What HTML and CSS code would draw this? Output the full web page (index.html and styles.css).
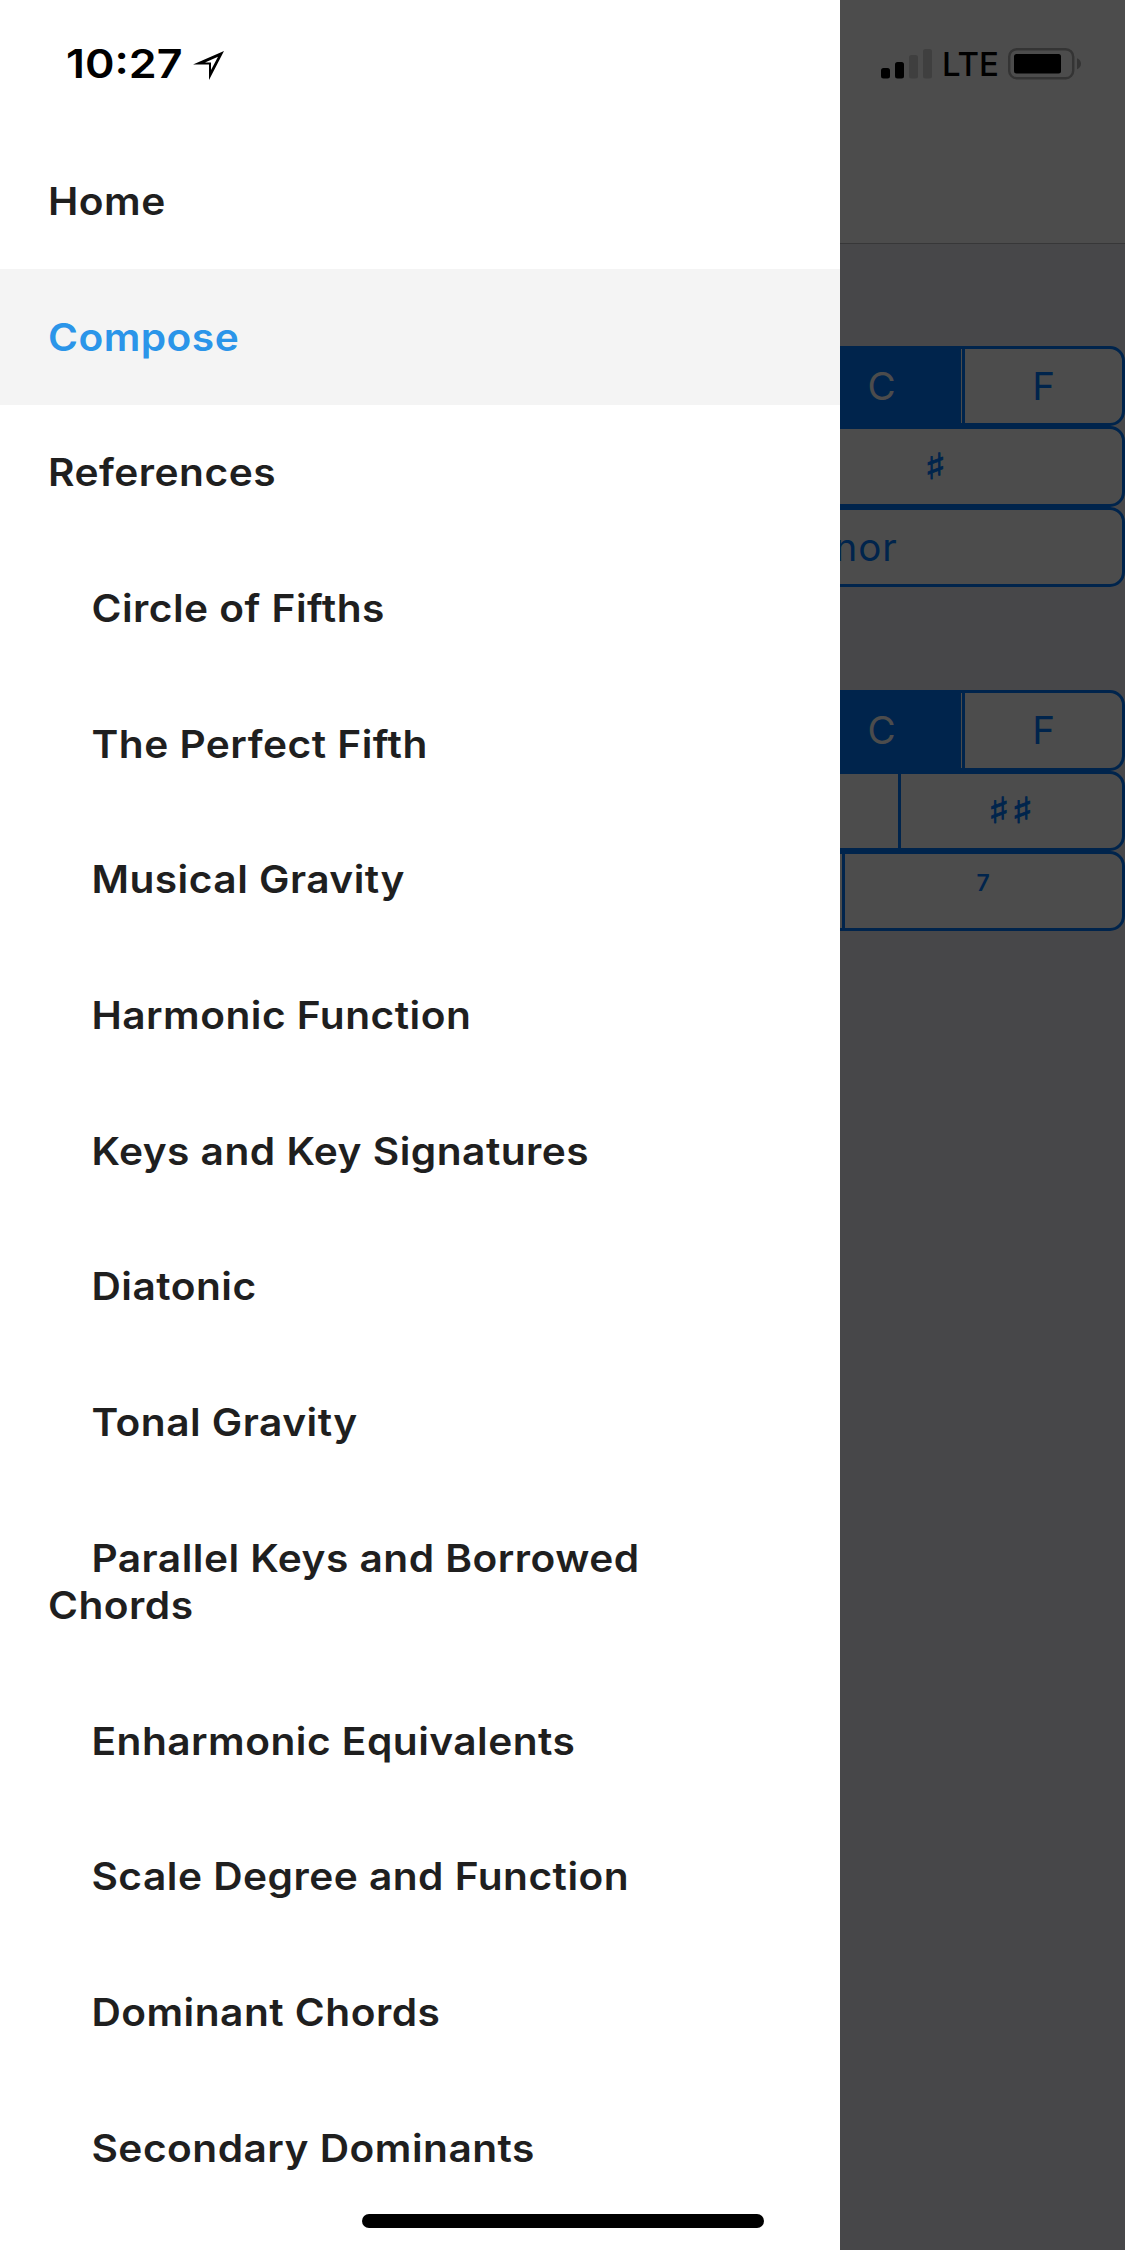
FILE: index.html
```html
<!DOCTYPE html>
<html lang="en">
<head>
<meta charset="utf-8">
<title>Compose</title>
<link rel="stylesheet" href="styles.css">
</head>
<body>
<main class="screen">
  <header class="navbar"></header>
  <section class="group">
    <div class="segments"><span></span><span></span><span></span><span></span><span></span><span class="selected">C</span><span class="last">F</span></div>
    <div class="segments"><span></span><span></span><span><i class="sharp">♯</i></span></div>
    <div class="segments"><span></span><span class="quality">Minor</span></div>
  </section>
  <section class="group">
    <div class="segments"><span></span><span></span><span></span><span></span><span></span><span class="selected">C</span><span class="last">F</span></div>
    <div class="segments"><span></span><span></span><span></span><span></span><span><i class="sharp">♯♯</i></span></div>
    <div class="segments"><span></span><span></span><span></span><span class="seventh">7</span></div>
  </section>
</main>
<div class="overlay"></div>
<nav class="drawer">
  <a class="item"><span>Home</span></a>
  <a class="item active"><span>Compose</span></a>
  <a class="item"><span>References</span></a>
  <a class="item sub"><span>Circle of Fifths</span></a>
  <a class="item sub"><span>The Perfect Fifth</span></a>
  <a class="item sub"><span>Musical Gravity</span></a>
  <a class="item sub"><span>Harmonic Function</span></a>
  <a class="item sub"><span>Keys and Key Signatures</span></a>
  <a class="item sub"><span>Diatonic</span></a>
  <a class="item sub"><span>Tonal Gravity</span></a>
  <a class="item sub"><span>Parallel Keys and Borrowed Chords</span></a>
  <a class="item sub"><span>Enharmonic Equivalents</span></a>
  <a class="item sub"><span>Scale Degree and Function</span></a>
  <a class="item sub"><span>Dominant Chords</span></a>
  <a class="item sub"><span>Secondary Dominants</span></a>
</nav>
<div class="statusbar">
  <span class="time">10:27</span>
  <svg class="location" width="34" height="34" viewBox="0 0 34 34"><path d="M3 16.5 34 3 19 32V16.5Z"/><path d="M15 14.6 28 8.8 21 22V14.6Z" fill="#fff"/></svg>
  <svg class="signal" width="52" height="30" viewBox="0 0 52 30"><rect y="19" width="9" height="10.5" rx="2.5"/><rect x="14" y="13" width="9" height="16.5" rx="2.5"/><g fill="#3f3f3f"><rect x="28" y="6" width="9" height="23.5" rx="2.5"/><rect x="42" width="9" height="29.5" rx="2.5"/></g></svg>
  <span class="carrier">LTE</span>
  <svg class="battery" width="74" height="32" viewBox="0 0 74 32"><rect x="1.2" y="1.2" width="64" height="29" rx="7.5" fill="none" stroke="#343434" stroke-width="2.4"/><rect x="6" y="6" width="47" height="19.5" rx="2.5"/><path d="M69 10.3Q73 12 73 15.7T69 21.2Z" fill="#343434"/></svg>
</div>
<div class="home-indicator"></div>
</body>
</html>
```

FILE: styles.css
```css
* { box-sizing: border-box; }
body {
  margin: 0;
  width: 1125px;
  height: 2250px;
  overflow: hidden;
  position: relative;
  font-family: Inter, "Liberation Sans", sans-serif;
}
.screen { height: 2250px; background: #efeff4; }
.navbar { height: 244px; background: #fff; border-bottom: 1px solid #b8b8bb; }
.group { display: flex; flex-direction: column; padding-top: 102px; }
.segments {
  display: flex;
  height: 80.4px;
  border: 3px solid #007aff;
  border-radius: 15px;
  overflow: hidden;
  background: #fff;
  color: #007aff;
  font-size: 38.5px;
}
.segments span {
  flex: 1 1 0;
  display: flex;
  align-items: center;
  justify-content: center;
}
.segments span + span { border-left: 3px solid #007aff; }
.segments .selected {
  background: #007aff;
  color: #fff;
  box-shadow: inset -1px 0 #fff;
  padding-right: 2px;
}
.segments .last { flex: 0 0 160px; }
.segments .quality { letter-spacing: 1px; }
.sharp {
  font-family: "DejaVu Sans", sans-serif;
  font-style: normal;
  font-size: 36px;
  letter-spacing: 1.2px;
  -webkit-text-stroke: .8px #007aff;
  transform: scaleX(1.27);
}
.segments .seventh { font-size: 23px; font-weight: 600; padding-bottom: 17px; }
.group + .group { padding-top: 103px; }

.overlay { position: absolute; inset: 0; background: rgba(0, 0, 0, .7); }

.drawer {
  position: absolute;
  top: 0;
  left: 0;
  width: 840px;
  height: 2250px;
  padding-top: 133.6px;
  background: #fff;
  display: flex;
  flex-direction: column;
}
.item {
  padding: 44.35px 48px;
  line-height: 47px;
  font-size: 38px;
  font-weight: 600;
  color: #1f1f1f;
}
.item span {
  display: block;
  width: 670px;
  letter-spacing: .45px;
  transform: scaleX(1.07);
  transform-origin: left;
}
.item.sub span { text-indent: 40.6px; }
.item.active { color: #2b95e9; background: #f4f4f4; }

.statusbar {
  position: absolute;
  top: 40px;
  left: 66px;
  width: 1018px;
  height: 48px;
  display: flex;
  align-items: center;
}
.time {
  width: 124px;
  font-size: 40px;
  font-weight: 600;
  line-height: 46px;
  transform: scaleX(1.12);
  transform-origin: left;
}
.location { margin-top: 1px; }
.signal { margin-left: 657px; }
.carrier { font-size: 33px; font-weight: 500; width: 67px; padding-left: 9px; }
.battery { margin-left: 8px; }

.home-indicator {
  position: absolute;
  left: 362px;
  top: 2214px;
  width: 402px;
  height: 14px;
  border-radius: 7px;
  background: #000;
}
```
